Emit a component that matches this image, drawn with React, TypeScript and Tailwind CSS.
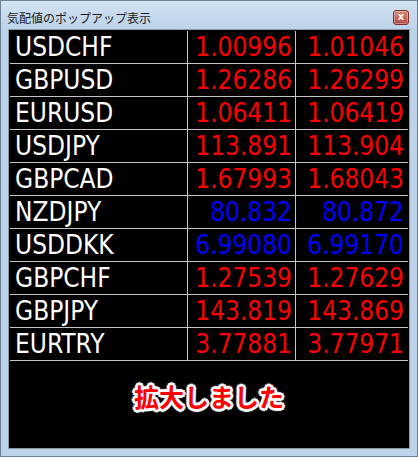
import React from 'react';

interface Quote {
  symbol: string;
  bid: string;
  ask: string;
  down: boolean; // blue when true
}

const QUOTES: Quote[] = [
  { symbol: 'USDCHF', bid: '1.00996', ask: '1.01046', down: false },
  { symbol: 'GBPUSD', bid: '1.26286', ask: '1.26299', down: false },
  { symbol: 'EURUSD', bid: '1.06411', ask: '1.06419', down: false },
  { symbol: 'USDJPY', bid: '113.891', ask: '113.904', down: false },
  { symbol: 'GBPCAD', bid: '1.67993', ask: '1.68043', down: false },
  { symbol: 'NZDJPY', bid: '80.832', ask: '80.872', down: true },
  { symbol: 'USDDKK', bid: '6.99080', ask: '6.99170', down: true },
  { symbol: 'GBPCHF', bid: '1.27539', ask: '1.27629', down: false },
  { symbol: 'GBPJPY', bid: '143.819', ask: '143.869', down: false },
  { symbol: 'EURTRY', bid: '3.77881', ask: '3.77971', down: false },
];

const QuoteRow: React.FC<{ quote: Quote }> = ({ quote }) => {
  const priceColor = quote.down ? 'text-[#0000ff]' : 'text-[#ff0000]';
  return (
    <div className="flex h-[33px] border-b border-[#c4c4c4]">
      <div className="w-[178px] shrink-0 flex items-center pl-[5px] border-r border-[#c4c4c4] text-white">
        {quote.symbol}
      </div>
      <div className={`w-[108px] shrink-0 flex items-center justify-end pr-[3px] border-r border-[#c4c4c4] ${priceColor}`}>
        {quote.bid}
      </div>
      <div className={`flex-1 flex items-center justify-end pr-[4px] ${priceColor}`}>{quote.ask}</div>
    </div>
  );
};

export default function App() {
  return (
    <div className="w-[418px] h-[457px] flex flex-col border border-[#6f8195] bg-[#bcd3ea]">
      {/* title bar */}
      <div className="h-[28px] shrink-0 flex items-center justify-between pl-[6px] pr-[8px] pt-[5px] bg-gradient-to-b from-[#d3e2f2] to-[#bcd3ea]">
        <span className="text-[12px] leading-none text-[#1c1c1c] [font-family:'Noto_Sans_CJK_JP',sans-serif]">
          気配値のポップアップ表示
        </span>
        <button className="w-[16px] h-[15px] flex items-center justify-center rounded-[3px] border border-[#7a3128] bg-gradient-to-b from-[#d88a7d] to-[#b24a3e] shadow-[inset_0_0_0_1px_rgba(255,255,255,0.35)]">
          <span className="text-[10px] leading-none font-bold text-white [font-family:'DejaVu_Sans',sans-serif] -mt-[1px]">x</span>
        </button>
      </div>

      {/* quote board */}
      <div className="flex-1 mx-[7px] mb-[7px] flex flex-col border border-[#8b96a2] bg-black p-[1px]">
        <div className="flex flex-col text-[26px] leading-none [font-family:'DejaVu_Sans_Condensed','DejaVu_Sans',sans-serif]">
          {QUOTES.map((q) => (
            <QuoteRow key={q.symbol} quote={q} />
          ))}
        </div>
        <div className="flex-1 flex justify-center pt-[23px]">
          <span className="text-[25px] leading-none font-bold text-[#ff0000] [font-family:'Noto_Sans_CJK_JP',sans-serif] [text-shadow:2px_0_0_#fff,-2px_0_0_#fff,0_2px_0_#fff,0_-2px_0_#fff,2px_2px_0_#fff,-2px_-2px_0_#fff,2px_-2px_0_#fff,-2px_2px_0_#fff,3px_0_1px_#fff,-3px_0_1px_#fff,0_3px_1px_#fff,0_-3px_1px_#fff]">
            拡大しました
          </span>
        </div>
      </div>
    </div>
  );
}
